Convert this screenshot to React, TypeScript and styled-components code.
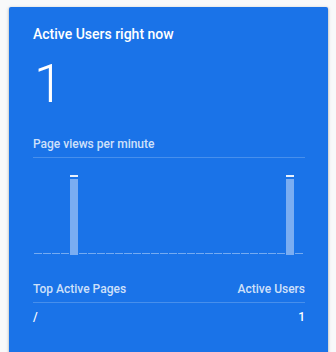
import styled, { createGlobalStyle } from "styled-components"

const GlobalStyle = createGlobalStyle`
  html, body {
    margin: 0;
    padding: 0;
    background: #f8f9fa;
    overflow: hidden;
  }
  body {
    font-family: Roboto, "Liberation Sans", Arial, sans-serif;
  }
`

const Page = styled('div')`
  padding: 7px 8px 0 9px;
`

const Card = styled('section')`
  width: 319px;
  min-height: 380px;
  box-sizing: border-box;
  padding: 17px 23px 24px 24px;
  background: #1a73e8;
  border-radius: 2px;
  box-shadow: 0 1px 2px rgba(60, 64, 67, 0.3), 0 1px 3px 1px rgba(60, 64, 67, 0.15);
  color: #fff;
`

const Title = styled('h2')`
  margin: 0;
  font-size: 14px;
  line-height: 20px;
  font-weight: 500;
`

const BigNumber = styled('div')`
  margin-top: 14px;
  font-size: 53px;
  line-height: 53px;
  font-weight: 300;
  padding-left: 1px;
`

const SectionHead = styled('div')<{ $top: number }>`
  margin-top: ${p => p.$top}px;
  display: flex;
  justify-content: space-between;
  padding-bottom: 5px;
  border-bottom: 1px solid rgba(255, 255, 255, 0.2);
  font-size: 12px;
  line-height: 16px;
  font-weight: 500;
  color: rgba(255, 255, 255, 0.8);
`

const Chart = styled('div')`
  margin-top: 17px;
  height: 80px;
  display: flex;
  align-items: flex-end;
  gap: 1px;
  padding-left: 1px;
`

const Column = styled('div')`
  width: 8px;
  display: flex;
  flex-direction: column;
`

const Cap = styled('div')`
  height: 2px;
  margin-bottom: 2px;
  background: rgba(255, 255, 255, 0.9);
`

const Bar = styled('div')<{ $h: number }>`
  height: ${p => p.$h}px;
  background: rgba(255, 255, 255, 0.42);
`

const Dash = styled('div')`
  height: 1px;
  margin-bottom: 1px;
  background: rgba(255, 255, 255, 0.4);
`

const Row = styled('div')`
  display: flex;
  justify-content: space-between;
  padding-top: 6px;
  font-size: 12px;
  line-height: 16px;
  font-weight: 500;
  color: #fff;
`

const views = Array.from({ length: 30 }, (_, i) => (i === 4 || i === 28 ? 1 : 0))

export default function App() {
  return (
    <>
      <GlobalStyle />
      <Page>
        <Card>
          <Title>Active Users right now</Title>
          <BigNumber>1</BigNumber>

          <SectionHead $top={25}>
            <span>Page views per minute</span>
          </SectionHead>
          <Chart>
            {views.map((v, i) => (
              <Column key={i}>
                {v > 0 ? (
                  <>
                    <Cap />
                    <Bar $h={76} />
                  </>
                ) : (
                  <Dash />
                )}
              </Column>
            ))}
          </Chart>

          <SectionHead $top={26}>
            <span>Top Active Pages</span>
            <span>Active Users</span>
          </SectionHead>
          <Row>
            <span>/</span>
            <span>1</span>
          </Row>
        </Card>
      </Page>
    </>
  )
}
